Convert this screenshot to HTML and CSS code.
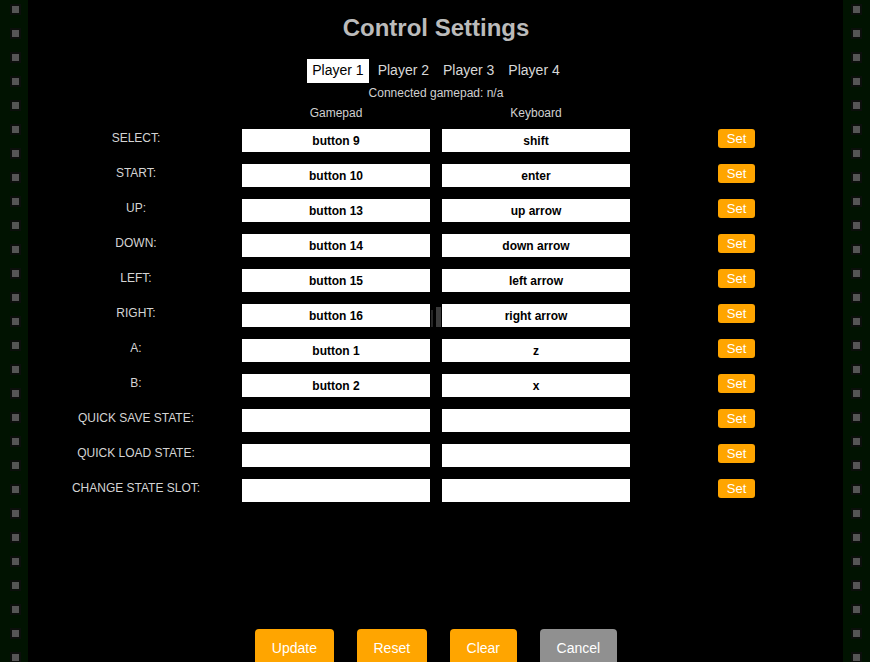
FILE: index.html
```html
<!DOCTYPE html>
<html>
<head>
<meta charset="utf-8">
<link rel="stylesheet" href="styles.css">
</head>
<body>
<div class="page">
  <div class="strip strip-left"></div>
  <main class="main">
    <h1 class="title">Control Settings</h1>
    <div class="tabs">
      <span class="tab active">Player 1</span>
      <span class="tab">Player 2</span>
      <span class="tab">Player 3</span>
      <span class="tab">Player 4</span>
    </div>
    <div class="status">Connected gamepad: n/a</div>
    <div class="grid">
      <div class="head head-pad">Gamepad</div>
      <div class="head head-kb">Keyboard</div>

      <div class="label">SELECT:</div><div class="field pad">button 9</div><div class="field kb">shift</div><button class="set">Set</button>
      <div class="label">START:</div><div class="field pad">button 10</div><div class="field kb">enter</div><button class="set">Set</button>
      <div class="label">UP:</div><div class="field pad">button 13</div><div class="field kb">up arrow</div><button class="set">Set</button>
      <div class="label">DOWN:</div><div class="field pad">button 14</div><div class="field kb">down arrow</div><button class="set">Set</button>
      <div class="label">LEFT:</div><div class="field pad">button 15</div><div class="field kb">left arrow</div><button class="set">Set</button>
      <div class="label">RIGHT:</div><div class="field pad">button 16</div><div class="field kb handle-host">right arrow<span class="handle"><i class="h1"></i><i class="h2"></i></span></div><button class="set">Set</button>
      <div class="label">A:</div><div class="field pad">button 1</div><div class="field kb">z</div><button class="set">Set</button>
      <div class="label">B:</div><div class="field pad">button 2</div><div class="field kb">x</div><button class="set">Set</button>
      <div class="label">QUICK SAVE STATE:</div><div class="field pad"></div><div class="field kb"></div><button class="set">Set</button>
      <div class="label">QUICK LOAD STATE:</div><div class="field pad"></div><div class="field kb"></div><button class="set">Set</button>
      <div class="label">CHANGE STATE SLOT:</div><div class="field pad"></div><div class="field kb"></div><button class="set">Set</button>
    </div>
    <div class="actions">
      <button class="btn">Update</button>
      <button class="btn">Reset</button>
      <button class="btn">Clear</button>
      <button class="btn btn-grey">Cancel</button>
    </div>
  </main>
  <div class="strip strip-right"></div>
</div>
</body>
</html>
```
FILE: styles.css
```css
html, body {
  margin: 0;
  padding: 0;
  background: #000;
  height: 100%;
  overflow: hidden;
}
body {
  font-family: "Liberation Sans", Arial, sans-serif;
  color: #d4d4d4;
}
.page {
  display: flex;
  height: 662px;
}
.strip {
  width: 28px;
  flex: none;
  background-color: #011301;
  background-repeat: repeat-y, repeat-y;
  background-image:
    linear-gradient(to bottom, transparent 6px, #555 6px, #555 13px, transparent 13px),
    linear-gradient(to bottom, transparent 4px, #0c0f0c 4px, #0c0f0c 15px, transparent 15px);
  background-size: 7px 24px, 11px 24px;
  background-position: 12px 0, 10px 0;
}
.strip-right {
  width: 27px;
  background-position: 10px 0, 8px 0;
}
.main {
  flex: 1;
  display: flex;
  flex-direction: column;
  align-items: center;
  padding-left: 1px;
}
.title {
  margin: 12px 0 15px;
  font-size: 24px;
  line-height: 32px;
  font-weight: bold;
  color: #bbbbbb;
}
.tabs {
  display: flex;
  gap: 4px;
}
.tab {
  font-size: 14px;
  line-height: 23px;
  padding: 0 5px;
  height: 24px;
  color: #d8d8d8;
}
.tab.active {
  background: #fff;
  color: #000;
}
.status {
  margin-top: 3px;
  font-size: 12px;
  line-height: 14px;
  color: #d0d0d0;
}
.grid {
  align-self: flex-start;
  margin: 6px 0 0 7px;
  display: grid;
  grid-template-columns: 206px 188px 200px 125px;
  row-gap: 12px;
  align-items: start;
}
.head {
  font-size: 12px;
  line-height: 14px;
  text-align: center;
  color: #d0d0d0;
  margin-bottom: -3px;
}
.head-pad { grid-column: 2; }
.head-kb { grid-column: 3; margin-left: 12px; }
.label {
  grid-column: 1;
  padding-right: 6px;
  font-size: 12px;
  line-height: 19px;
  text-align: center;
  color: #d4d4d4;
}
.field {
  height: 23px;
  background: #fff;
  color: #000;
  font-size: 12px;
  font-weight: bold;
  line-height: 24px;
  text-align: center;
  width: 188px;
}
.kb { margin-left: 12px; }
.handle-host { position: relative; }
.handle {
  position: absolute;
  left: -11px;
  top: 3px;
  width: 11px;
  height: 20px;
}
.handle .h1 {
  position: absolute;
  left: 0;
  top: 3px;
  width: 2px;
  height: 17px;
  background: #262626;
}
.handle .h2 {
  position: absolute;
  left: 5px;
  top: 0;
  width: 5px;
  height: 20px;
  background: #3a3a3a;
}
.set {
  margin-left: 88px;
  width: 37px;
  height: 19px;
  padding: 0;
  border: none;
  border-radius: 3px;
  background: #ffa500;
  color: #fff;
  font-family: "Liberation Sans", Arial, sans-serif;
  font-size: 13px;
  line-height: 19px;
}
.actions {
  margin-top: 127px;
  display: flex;
  gap: 23.5px;
}
.btn {
  height: 38px;
  padding: 0 16.5px;
  border: none;
  border-radius: 4px;
  background: #ffa500;
  color: #fff;
  font-family: "Liberation Sans", Arial, sans-serif;
  font-size: 14px;
}
.btn-grey {
  background: #909090;
}
```
